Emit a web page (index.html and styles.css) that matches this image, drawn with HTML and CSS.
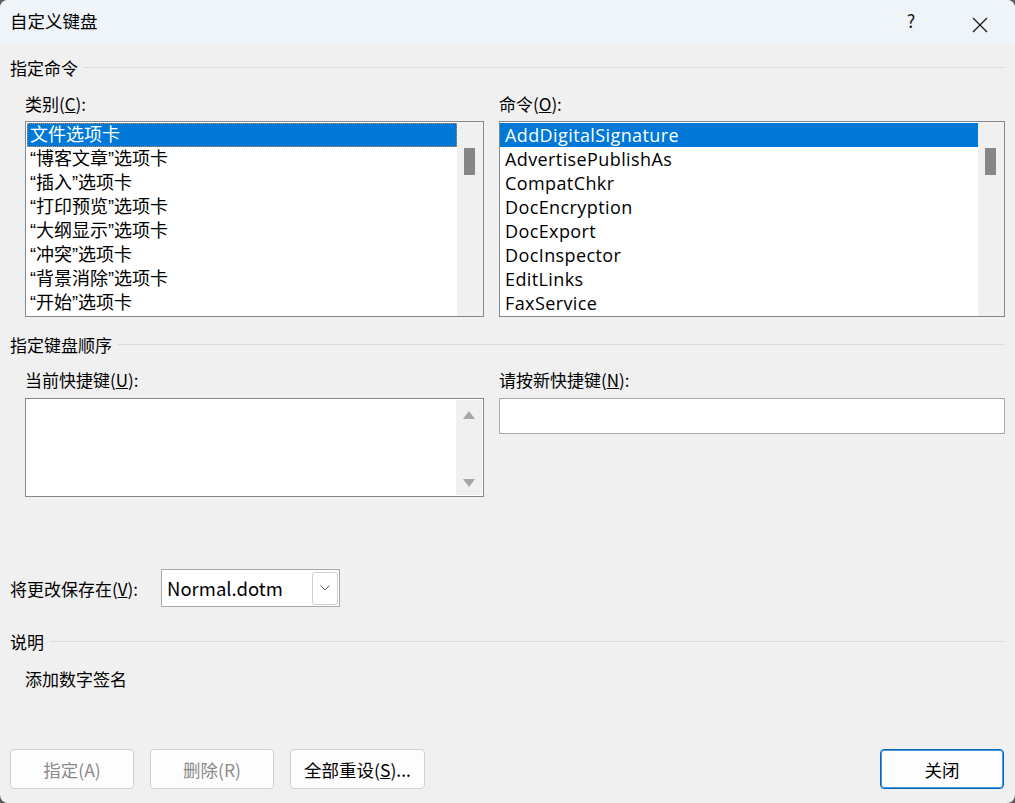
FILE: index.html
```html
<!DOCTYPE html>
<html>
<head>
    <meta charset="utf-8">
    <title>自定义键盘</title>
    <link rel="stylesheet" href="styles.css">
</head>
<body>
<div class="window">
    <!-- 标题栏 -->
    <div class="titlebar">
        <div class="title">自定义键盘</div>
        <div class="tb-help">?</div>
        <div class="tb-close">
            <svg width="16" height="16" viewBox="0 0 16 16"><path d="M1 1 L15 15 M15 1 L1 15" stroke="#1a1a1a" stroke-width="1.3" fill="none"/></svg>
        </div>
    </div>

    <div class="content">
        <div class="group-title">指定命令</div>
        <div class="cols">
            <div class="col">
                <div class="label">类别(<u>C</u>):</div>
                <div class="listbox">
                    <ul class="items">
                        <li class="selected focus">文件选项卡</li>
                        <li>“博客文章”选项卡</li>
                        <li>“插入”选项卡</li>
                        <li>“打印预览”选项卡</li>
                        <li>“大纲显示”选项卡</li>
                        <li>“冲突”选项卡</li>
                        <li>“背景消除”选项卡</li>
                        <li>“开始”选项卡</li>
                    </ul>
                    <div class="scrollbar"><div class="thumb"></div></div>
                </div>
            </div>
            <div class="col">
                <div class="label">命令(<u>O</u>):</div>
                <div class="listbox">
                    <ul class="items latin">
                        <li class="selected">AddDigitalSignature</li>
                        <li>AdvertisePublishAs</li>
                        <li>CompatChkr</li>
                        <li>DocEncryption</li>
                        <li>DocExport</li>
                        <li>DocInspector</li>
                        <li>EditLinks</li>
                        <li>FaxService</li>
                    </ul>
                    <div class="scrollbar"><div class="thumb"></div></div>
                </div>
            </div>
        </div>

        <div class="group-title second">指定键盘顺序</div>
        <div class="cols keys">
            <div class="col">
                <div class="label">当前快捷键(<u>U</u>):</div>
                <div class="keybox">
                    <div class="keylist"></div>
                    <div class="scrollbar arrows">
                        <span class="arrow-up"></span>
                        <span class="arrow-down"></span>
                    </div>
                </div>
            </div>
            <div class="col">
                <div class="label">请按新快捷键(<u>N</u>):</div>
                <div class="newkey"></div>
            </div>
        </div>

        <div class="save-row">
            <div class="save-label">将更改保存在(<u>V</u>):</div>
            <div class="combo">
                <span class="combo-text">Normal.dotm</span>
                <span class="combo-btn">
                    <svg width="10" height="6" viewBox="0 0 10 6"><path d="M0.5 0.5 L5 5 L9.5 0.5" stroke="#606060" stroke-width="1" fill="none"/></svg>
                </span>
            </div>
        </div>

        <div class="group-title third">说明</div>
        <div class="desc">添加数字签名</div>

        <div class="footer">
            <button class="btn" disabled>指定(A)</button>
            <button class="btn" disabled>删除(R)</button>
            <button class="btn">全部重设(<u>S</u>)...</button>
            <button class="btn primary">关闭</button>
        </div>
    </div>
</div>
</body>
</html>
```

FILE: styles.css
```css
html {
    background: #5c5c5c;
}
body {
    margin: 0;
    font-family: "Noto Sans CJK SC", "Noto Sans", sans-serif;
    font-size: 17px;
    color: #000;
}
.window {
    height: 803px;
    background: #f0f0f0;
    border-radius: 8px;
    overflow: hidden;
    display: flex;
    flex-direction: column;
}

/* 标题栏 */
.titlebar {
    height: 43px;
    background: #eff4f9;
    display: flex;
    align-items: center;
    padding-left: 10px;
}
.title {
    flex: 1;
    font-size: 17.5px;
    margin-top: -3px;
}
.tb-help {
    width: 20px;
    text-align: center;
    font-size: 18px;
    color: #1a1a1a;
    margin-right: 51px;
    margin-top: -3px;
}
.tb-close {
    width: 16px;
    height: 16px;
    margin-right: 27px;
    margin-top: -2px;
}

.content {
    flex: 1;
    display: flex;
    flex-direction: column;
    padding: 0 10px 14px 10px;
}

/* 分组标题 */
.group-title {
    display: flex;
    align-items: center;
    line-height: 24px;
    margin-top: 13px;
}
.group-title::after {
    content: "";
    flex: 1;
    height: 1px;
    background: #dadada;
    margin-left: 6px;
    margin-top: -1px;
}
.group-title.second {
    margin-top: 16px;
}
.group-title.third {
    margin-top: 23px;
}

.cols {
    display: flex;
    gap: 15px;
    padding-left: 15px;
    margin-top: 12px;
}
.cols .col:first-child {
    width: 459px;
}
.cols .col:last-child {
    flex: 1;
}
.cols.keys {
    margin-top: 11px;
}
.label {
    line-height: 24px;
    margin-bottom: 5px;
}
.keys .label {
    margin-bottom: 6px;
}

/* 列表框 */
.listbox {
    height: 194px;
    border: 1px solid #828790;
    background: #fff;
    display: flex;
}
.items {
    flex: 1;
    list-style: none;
    margin: 0;
    padding: 1px 0 0 0;
    font-family: "Liberation Sans", "Noto Sans CJK SC", sans-serif;
    font-size: 18px;
}
.items li {
    height: 24px;
    line-height: 24px;
    padding-left: 3px;
    margin-left: 1px;
    white-space: nowrap;
}
.items.latin {
    font-family: "Open Sans", sans-serif;
    font-size: 18px;
    letter-spacing: 0.4px;
}
.items.latin li {
    margin-left: 0;
    padding-left: 5px;
}
.items li.selected {
    background: #0078d7;
    color: #fff;
}
.items li.focus {
    outline: 1px dotted #d98a3a;
    outline-offset: -1px;
}
.scrollbar {
    width: 26px;
    background: #f0f0f0;
    position: relative;
}
.thumb {
    position: absolute;
    left: 7px;
    top: 26px;
    width: 11px;
    height: 27px;
    background: #868686;
}

/* 快捷键框 */
.keybox {
    height: 97px;
    border: 1px solid #828790;
    background: #fff;
    display: flex;
}
.keylist {
    flex: 1;
}
.arrows {
    margin: 1px 1px 1px 0;
    display: flex;
    flex-direction: column;
    justify-content: space-between;
    align-items: center;
    padding: 11px 0 8px 0;
}
.arrow-up, .arrow-down {
    width: 0;
    height: 0;
    border-left: 6px solid transparent;
    border-right: 6px solid transparent;
}
.arrow-up {
    border-bottom: 8px solid #a6a6a6;
}
.arrow-down {
    border-top: 8px solid #a6a6a6;
}
.newkey {
    height: 34px;
    border: 1px solid #a8a8a8;
    background: #fff;
}

/* 保存位置 */
.save-row {
    display: flex;
    align-items: center;
    margin-top: 72px;
}
.save-label {
    width: 151px;
}
.combo {
    width: 177px;
    height: 36px;
    border: 1px solid #a8a8a8;
    background: #fff;
    display: flex;
    align-items: center;
}
.combo-text {
    flex: 1;
    padding-left: 5px;
    font-size: 18.5px;
}
.combo-btn {
    width: 24px;
    height: 31px;
    border: 1px solid #cfcfcf;
    border-radius: 3px;
    margin-right: 1px;
    display: flex;
    align-items: center;
    justify-content: center;
}

.desc {
    padding-left: 15px;
    line-height: 24px;
    margin-top: 13px;
}

/* 底部按钮 */
.footer {
    margin-top: auto;
    display: flex;
    gap: 16px;
    padding-right: 1px;
}
.btn {
    width: 124px;
    height: 40px;
    font-family: inherit;
    font-size: 17.5px;
    background: #fdfdfd;
    border: 1px solid #d0d0d0;
    border-radius: 4px;
    color: #000;
    padding: 0;
}
.btn:nth-child(3) {
    width: 135px;
}
.btn:disabled {
    color: #8a8a8a;
}
.btn.primary {
    margin-left: auto;
    border: 1px solid #0067c0;
    box-shadow: inset 0 0 0 1px #4a95d8;
}
```
